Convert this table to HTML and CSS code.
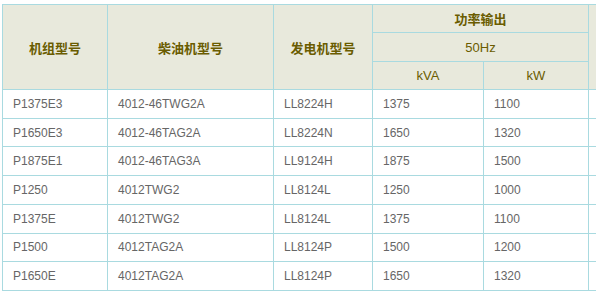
FILE: index.html
```html
<!DOCTYPE html>
<html lang="zh">
<head>
<meta charset="utf-8">
<link rel="stylesheet" href="styles.css">
</head>
<body>
<table class="spec">
  <colgroup>
    <col class="c1"><col class="c2"><col class="c3"><col class="c4"><col class="c5"><col class="c6">
  </colgroup>
  <thead>
    <tr class="h1">
      <th rowspan="3" class="hb">机组型号</th>
      <th rowspan="3" class="hb">柴油机型号</th>
      <th rowspan="3" class="hb">发电机型号</th>
      <th colspan="2" class="hb">功率输出</th>
      <th rowspan="3"></th>
    </tr>
    <tr class="h2">
      <th colspan="2" class="hn">50Hz</th>
    </tr>
    <tr class="h3">
      <th class="hn">kVA</th>
      <th class="hn">kW</th>
    </tr>
  </thead>
  <tbody>
    <tr><td>P1375E3</td><td>4012-46TWG2A</td><td>LL8224H</td><td>1375</td><td>1100</td><td></td></tr>
    <tr><td>P1650E3</td><td>4012-46TAG2A</td><td>LL8224N</td><td>1650</td><td>1320</td><td></td></tr>
    <tr><td>P1875E1</td><td>4012-46TAG3A</td><td>LL9124H</td><td>1875</td><td>1500</td><td></td></tr>
    <tr><td>P1250</td><td>4012TWG2</td><td>LL8124L</td><td>1250</td><td>1000</td><td></td></tr>
    <tr><td>P1375E</td><td>4012TWG2</td><td>LL8124L</td><td>1375</td><td>1100</td><td></td></tr>
    <tr><td>P1500</td><td>4012TAG2A</td><td>LL8124P</td><td>1500</td><td>1200</td><td></td></tr>
    <tr><td>P1650E</td><td>4012TAG2A</td><td>LL8124P</td><td>1650</td><td>1320</td><td></td></tr>
  </tbody>
</table>
</body>
</html>
```
FILE: styles.css
```css
html, body {
  margin: 0;
  padding: 0;
  background: #ffffff;
  overflow: hidden;
}
body {
  padding: 4px 0 0 2px;
  font-family: "Liberation Sans", "Noto Sans CJK SC", sans-serif;
}
.spec {
  border-collapse: collapse;
  table-layout: fixed;
  width: 616px;
}
.c1 { width: 105px; }
.c2 { width: 166px; }
.c3 { width: 99px; }
.c4 { width: 111px; }
.c5 { width: 105px; }
.c6 { width: 30px; }
.spec th, .spec td {
  border: 1px solid #a9dae0;
  padding: 0;
}
.spec th {
  background: #e8e9dc;
  color: #6a5c00;
  text-align: center;
  font-size: 13px;
}
.spec .hb { font-weight: bold; }
.spec .hn { font-weight: normal; }
.h1 { height: 28px; }
.h2 { height: 29px; }
.h3 { height: 28px; }
.spec td {
  height: 27.72px;
  font-size: 12px;
  color: #666666;
  padding-left: 10px;
  text-align: left;
}
```
